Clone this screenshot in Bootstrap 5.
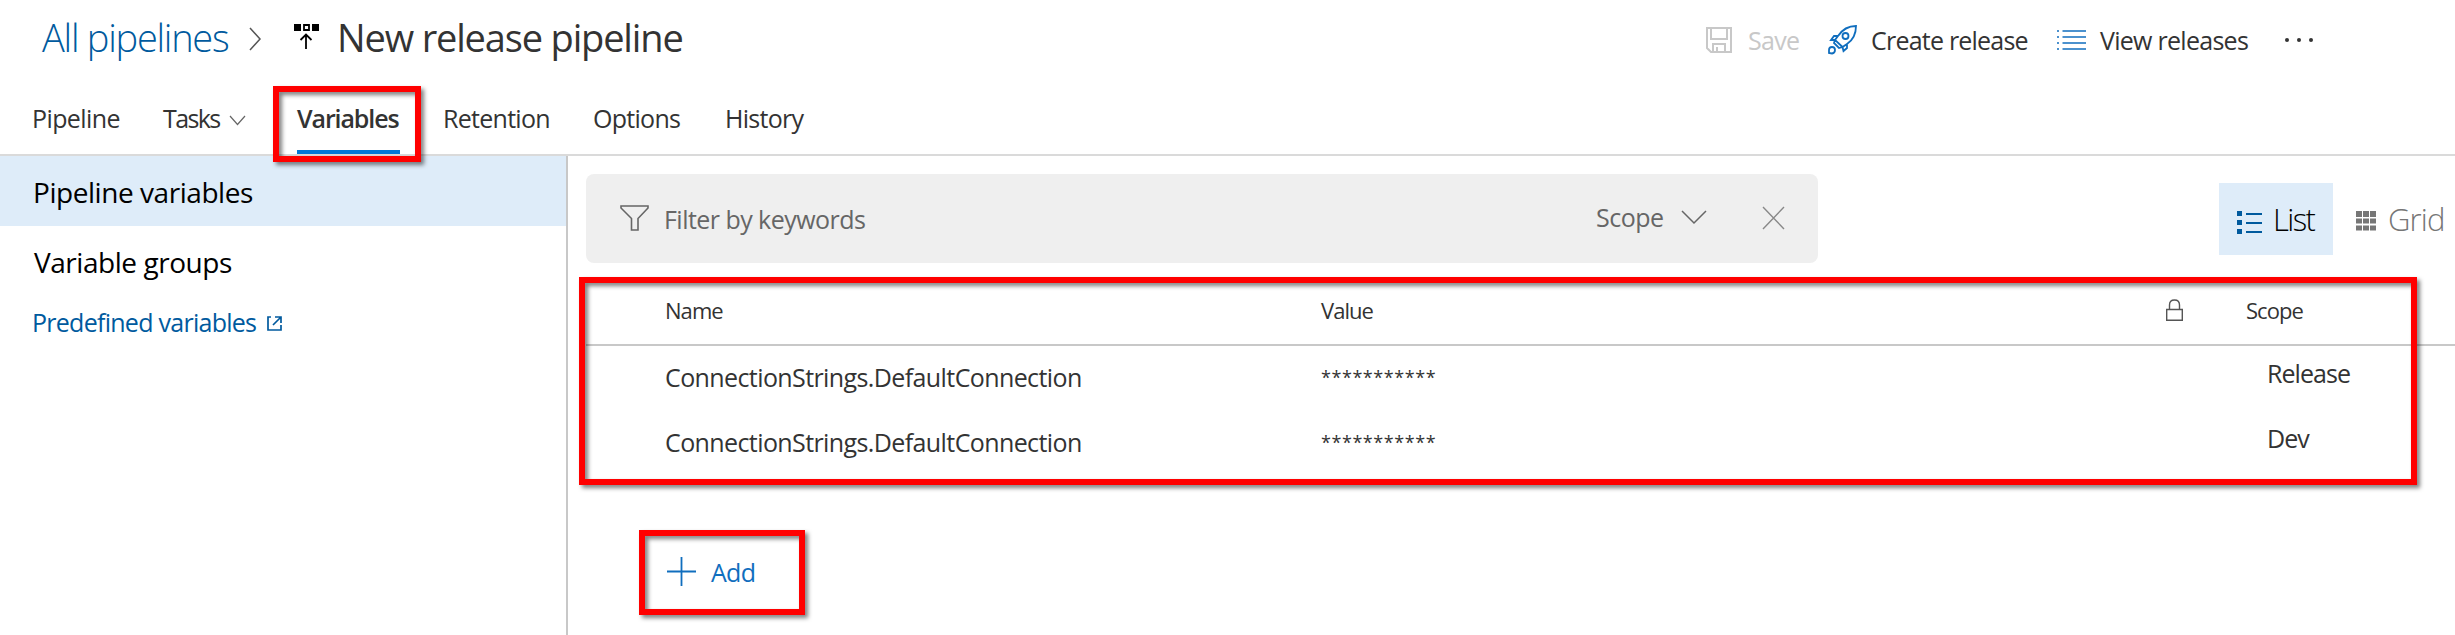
<!DOCTYPE html>
<html lang="en">
<head>
<meta charset="utf-8">
<title>New release pipeline - Variables</title>
<link rel="stylesheet" href="https://cdn.jsdelivr.net/npm/bootstrap@5.3.0/dist/css/bootstrap.min.css">
<style>
  body { font-family: "Open Sans", "Noto Sans", sans-serif; font-size: 25px; color: #333; background: #fff; height: 635px; overflow: hidden; letter-spacing: -.72px; white-space: nowrap; }
  svg { display: block; flex: none; overflow: visible; }
  a { text-decoration: none; }
  .page { height: 635px; }

  .topbar { height: 82px; padding-left: 42px; }
  .crumbs { font-size: 38px; line-height: 75px; height: 75px; }
  .crumb-link { width: 207px; font-weight: 300; letter-spacing: -1.26px; color: #005a9e; }
  .crumb-title { font-size: 38px; line-height: 75px; font-weight: 400; letter-spacing: -1.16px; margin: 0 0 0 18px; width: 1369px; }
  .tools { line-height: 81px; height: 81px; }
  .tools .disabled-tool { color: #c8c8c8; }

  .tabs { height: 74px; border-bottom: 2px solid #dadada; padding-left: 32px; line-height: 73px; }
  .tabs .nav-link { padding: 0; color: #333; height: 72px; }
  .tabs .active { font-weight: 600; letter-spacing: -1.1px; width: 103px; box-shadow: inset 0 -4px #0078d7; }

  .side { width: 568px; border-right: 2px solid #c8c8c8; flex: none; font-size: 28px; letter-spacing: -.45px; }
  .side .list-group-item { border: 0; border-radius: 0; padding: 0 0 0 33px; height: 70px; line-height: 73px; color: #000; background: #fff; }
  .side .list-group-item.chosen { background: #deecf9; }
  .side .help-link { font-size: 25px; letter-spacing: -.73px; color: #005a9e; height: 52px; line-height: 53px; padding-left: 32px; }

  .content-pane { padding: 18px 0 0 18px; min-width: 0; }
  .filter { width: 1231.5px; height: 89px; border-radius: 8px; background: #efefef; color: #666; padding-left: 34px; }
  .view-btn { height: 72px; font-size: 31px; font-weight: 300; line-height: 73px; letter-spacing: -1.2px; }
  .view-list { margin-left: 401.5px; width: 114px; background: #deecf9; color: #000; padding-left: 18px; }
  .view-grid { color: #767676; padding-left: 23px; }

  .vars { display: grid; grid-template-columns: 656px 844px 81px 1fr; }
  .vars-head { margin-top: 13px; height: 70px; border-bottom: 2px solid #c8c8c8; padding-left: 79px; font-size: 22px; letter-spacing: -.95px; line-height: 69px; }
  .vars-row { height: 65px; line-height: 63px; padding-left: 79px; letter-spacing: -.6px; }
  .vars-row .masked { font-size: 18px; letter-spacing: .55px; }
  .vars-row .scope { line-height: 55px; padding-left: 21px; letter-spacing: -.95px; grid-column: 4; }
  .add-link { color: #106ebe; margin: 64px 0 0 81px; height: 65px; line-height: 65px; }

  .callout { position: absolute; border: 6px solid #f00; filter: drop-shadow(3px 3px 2px rgba(0,0,0,.5)); pointer-events: none; }
  .callout-tab { left: 273px; top: 86px; width: 148px; height: 76px; }
  .callout-table { left: 579px; top: 277px; width: 1838px; height: 208px; }
  .callout-add { left: 639px; top: 530px; width: 166px; height: 85px; }
</style>
</head>
<body>
<div class="page d-flex flex-column position-relative">
  <header class="topbar d-flex">
    <div class="crumbs d-flex">
      <a href="#" class="crumb-link">All pipelines</a>
      <svg width="12" height="22" style="margin-top:28px" fill="none" stroke="#555" stroke-width="1.5"><path d="M1 0 11 11 1 22"/></svg>
      <svg width="25" height="25" style="margin:24px 0 0 33px" fill="none" stroke="#000" stroke-width="2"><path d="M0 0H7V7H0zM18 0h7v7h-7z" fill="#000" stroke="none"/><path d="M10 1h5v5h-5z" stroke-width="1.800"/><path d="M12 25V11M6.500 16l5.500-5.500 5.500 5.500" stroke-width="1.800"/></svg>
      <h1 class="crumb-title">New release pipeline</h1>
    </div>
    <div class="tools d-flex">
      <svg width="26" height="26" style="margin-top:27px" fill="none" stroke="#c8c8c8" stroke-width="2"><path d="M1 1H25V25H5L1 21zM5 1V12H21V1M7 25V17H19V25M11 25V20"/></svg>
      <span class="disabled-tool" style="margin-left:16px;width:80px">Save</span>
      <svg width="30" height="30" style="margin-top:25px" fill="none" stroke="#106ebe" stroke-width="1.800"><path d="M28 1C20 1 14 5 10 11L7 15 14.500 22 19 19C25 15 28 9 28 1zM10 11H6L3 15 7 15M19 19V23L15.500 26 14.500 22M7 15 6 18 11 23 14.500 22M1 28V25Q1 22 4 22T7 25 4 28.500z"/><circle cx="17.500" cy="11" r="3"/></svg>
      <span style="margin-left:13px;width:186px;letter-spacing:-.78px">Create release</span>
      <svg width="29" height="20" style="margin-top:30px" stroke="#106ebe" stroke-width="1.700"><path d="M5.500 1H29M5.500 7H29M5.500 13H29M5.500 19H29M0 1H2M0 7H2M0 13H2M0 19H2"/></svg>
      <span style="margin-left:14px;width:183px">View releases</span>
      <svg width="32" height="5" style="margin-top:37px" fill="#333"><circle cx="4" cy="3" r="2"/><circle cx="16" cy="3" r="2"/><circle cx="28" cy="3" r="2"/></svg>
    </div>
  </header>

  <nav class="tabs nav flex-nowrap">
    <a href="#" class="nav-link" style="width:131px;letter-spacing:-.6px">Pipeline</a>
    <a href="#" class="nav-link d-flex" style="width:134px"><span style="width:67px;letter-spacing:-1.6px">Tasks</span><svg width="15" height="9" style="margin-top:34px" fill="none" stroke="#666" stroke-width="1.200"><path d="M0 0 7.500 8.500 15 0"/></svg></a>
    <a href="#" class="nav-link active">Variables</a>
    <a href="#" class="nav-link" style="width:150px;margin-left:43px">Retention</a>
    <a href="#" class="nav-link" style="width:132px">Options</a>
    <a href="#" class="nav-link">History</a>
  </nav>

  <div class="d-flex flex-grow-1">
    <aside class="side">
      <div class="list-group">
        <a href="#" class="list-group-item chosen">Pipeline variables</a>
        <a href="#" class="list-group-item" style="padding-left:34px">Variable groups</a>
      </div>
      <a href="#" class="help-link d-flex"><span style="width:235px">Predefined variables</span>
        <svg width="15" height="15" style="margin-top:20px" fill="none" stroke="#005a9e" stroke-width="1.700"><path d="M4 1H1V14H14V9M8 1H14V7M14 1 6 9"/></svg>
      </a>
    </aside>

    <main class="content-pane flex-grow-1">
      <div class="d-flex align-items-center">
        <div class="filter d-flex">
          <svg width="29" height="26" style="margin-top:31px" fill="none" stroke="#666" stroke-width="1.600"><path d="M1 1H28V3L18 13.500V25H11.500V13.500L1 3z"/></svg>
          <span style="margin-left:15px;width:932px;line-height:91px;letter-spacing:-.54px">Filter by keywords</span>
          <span style="width:86px;line-height:87px;letter-spacing:-.5px">Scope</span>
          <svg width="24" height="13" style="margin-top:37px" fill="none" stroke="#666" stroke-width="1.500"><path d="M0 0 12 12 24 0"/></svg>
          <svg width="21" height="22" style="margin:33px 0 0 57px" fill="none" stroke="#888" stroke-width="1.400"><path d="M0 0 21 22M21 0 0 22"/></svg>
        </div>
        <div class="view-btn view-list d-flex">
          <svg width="25" height="24" style="margin-top:28px" fill="#005a9e"><path d="M0 0h5v5H0zM0 9h5v5H0zM0 18h5v5H0zM9 2h16v2H9zM9 11h16v2H9zM9 20h16v2H9z"/></svg>
          <span style="margin-left:11px;letter-spacing:-1.6px">List</span>
        </div>
        <div class="view-btn view-grid d-flex">
          <svg width="20" height="20" style="margin-top:28px" fill="#767676"><path d="M0 0h6v6H0zM7 0h6v6H7zM14 0h6v6h-6zM0 7.500h6v5H0zM7 7.500h6v5H7zM14 7.500h6v5h-6zM0 14.500h6v5H0zM7 14.500h6v5H7zM14 14.500h6v5h-6z"/></svg>
          <span style="margin-left:12px;letter-spacing:-.83px">Grid</span>
        </div>
      </div>

      <div class="vars vars-head">
        <span>Name</span><span>Value</span>
        <svg width="17" height="22" style="margin:23px 0 0 1px" fill="none" stroke="#555" stroke-width="1.400"><path d="M.7 10.500H16.300V21.300H.7zM3.500 10.500V6Q3.500 1 8.500 1T13.500 6V10.500"/></svg>
        <span>Scope</span>
      </div>
      <div class="vars vars-row"><span>ConnectionStrings.DefaultConnection</span><span class="masked">***********</span><span class="scope">Release</span></div>
      <div class="vars vars-row"><span>ConnectionStrings.DefaultConnection</span><span class="masked">***********</span><span class="scope">Dev</span></div>

      <a href="#" class="add-link d-flex">
        <svg width="29" height="29" style="margin-top:17px" stroke="#106ebe" stroke-width="1.800"><path d="M14.500 0V29M0 14.500H29"/></svg>
        <span style="margin-left:15px">Add</span>
      </a>
    </main>
  </div>

  <div class="callout callout-tab"></div>
  <div class="callout callout-table"></div>
  <div class="callout callout-add"></div>
</div>
<script src="https://cdn.jsdelivr.net/npm/bootstrap@5.3.0/dist/js/bootstrap.bundle.min.js"></script>
</body>
</html>
